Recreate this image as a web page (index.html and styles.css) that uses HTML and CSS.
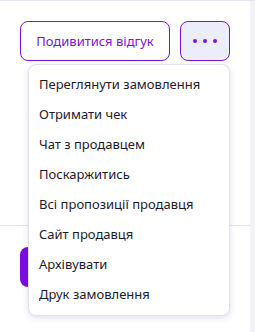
FILE: index.html
```html
<!DOCTYPE html>
<html lang="uk">
<head>
    <meta charset="UTF-8">
    <meta name="viewport" content="width=device-width, initial-scale=1.0">
    <title>Замовлення</title>
    <link rel="stylesheet" href="styles.css">
</head>
<body>
    <div class="page">
        <div class="order">
            <div class="actions">
                <button class="btn-outline">Подивитися відгук</button>
                <button class="btn-more" aria-label="Більше">
                    <span class="dot"></span><span class="dot"></span><span class="dot"></span>
                </button>
                <ul class="menu">
                    <li>Переглянути замовлення</li>
                    <li>Отримати чек</li>
                    <li>Чат з продавцем</li>
                    <li>Поскаржитись</li>
                    <li>Всі пропозиції продавця</li>
                    <li>Сайт продавця</li>
                    <li>Архівувати</li>
                    <li>Друк замовлення</li>
                </ul>
            </div>
            <div class="divider"></div>
            <div class="next">
                <!-- кнопка під меню, текст закритий -->
                <button class="btn-primary" aria-label="Купити"></button>
            </div>
        </div>
        <div class="side"></div>
    </div>
</body>
</html>
```

FILE: styles.css
```css
body {
    margin: 0;
    font-family: "Noto Sans", "Open Sans", sans-serif;
    background-color: #ffffff;
}
.page {
    display: flex;
    height: 332px;
    border-top: 1px solid #e4e1f0;
    box-sizing: border-box;
}
.order {
    flex: 1;
}
.side {
    width: 5px;
    background-color: #f3f2f8;
}
.actions {
    position: relative;
    display: flex;
    gap: 10px;
    padding: 20px 0 0 20px;
    height: 204px;
}
.btn-outline, .btn-more {
    height: 40px;
    border: 1px solid #7a14d8;
    border-radius: 8px;
    box-sizing: border-box;
    font-family: inherit;
}
.btn-outline {
    width: 150px;
    background-color: #ffffff;
    color: #7a14d8;
    font-size: 13px;
    padding: 0;
}
.btn-more {
    width: 50px;
    background-color: #ebedf8;
    display: flex;
    align-items: center;
    justify-content: center;
    gap: 6px;
    padding: 0;
}
.dot {
    width: 4px;
    height: 4px;
    border-radius: 50%;
    background-color: #7a14d8;
}
.menu {
    position: absolute;
    top: 63px;
    left: 28px;
    width: 202px;
    margin: 0;
    padding: 4px 0 6px;
    list-style: none;
    background-color: #ffffff;
    border: 1px solid #e2e0ee;
    border-radius: 8px;
    box-shadow: 0 2px 6px rgba(60, 50, 110, 0.15);
    box-sizing: border-box;
    z-index: 2;
}
.menu li {
    height: 30px;
    line-height: 30px;
    padding-left: 10px;
    font-size: 13px;
    color: #1c1a2c;
}
.divider {
    height: 1px;
    background-color: #e4e1f0;
}
.next {
    padding: 21px 0 0 20px;
}
.btn-primary {
    height: 40px;
    width: 120px;
    border: none;
    border-radius: 8px;
    background-color: #7a0ddf;
}
```
